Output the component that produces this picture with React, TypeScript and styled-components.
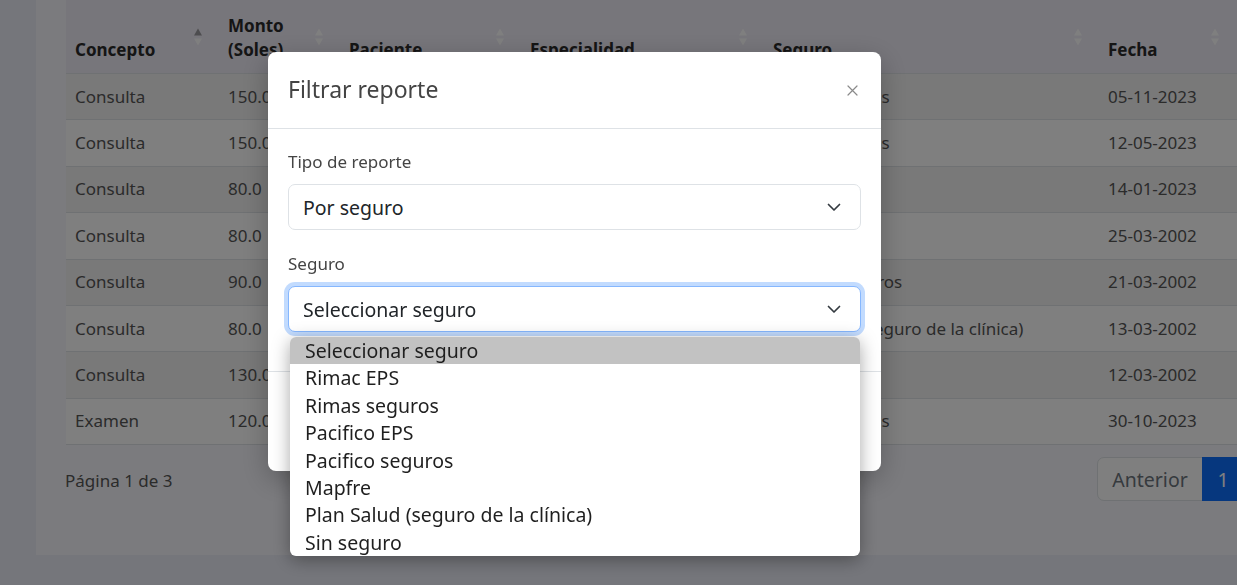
import React from 'react';
import styled, { createGlobalStyle, css } from 'styled-components';

const GlobalStyle = createGlobalStyle`
  * { box-sizing: border-box; }
  html, body { margin: 0; padding: 0; }
  body {
    width: 1237px;
    height: 585px;
    overflow: hidden;
    background: #eaecf6;
    font-family: "Noto Sans", "Open Sans", "DejaVu Sans", sans-serif;
    color: #212529;
  }
`;

const Page = styled.div`
  width: 1237px;
  height: 585px;
  overflow: hidden;
  padding-left: 36px;
`;

const Card = styled.section`
  width: 1429px;
  background: #f6f6fc;
  padding: 0 30px 54px;
`;

const Table = styled.table`
  width: 1369px;
  border-collapse: collapse;
  table-layout: fixed;
  font-size: 17px;
  color: #565656;
`;

const Col = styled.col<{ $w: number }>`
  width: ${(p) => p.$w}px;
`;

const Th = styled.th`
  position: relative;
  text-align: left;
  vertical-align: bottom;
  font-weight: 700;
  color: #2a2a2a;
  background: #eeecf6;
  line-height: 24px;
  padding: 14px 34px 11px 9px;
  border-bottom: 1px solid #dee2e6;
`;

const SortIcon = styled.span`
  position: absolute;
  right: 17px;
  top: 50%;
  transform: translateY(-50%);
  display: flex;
  flex-direction: column;
  gap: 3px;
`;

const Tri = styled.span<{ $dir: 'up' | 'down'; $active?: boolean }>`
  width: 0;
  height: 0;
  border-left: 4.5px solid transparent;
  border-right: 4.5px solid transparent;
  ${(p) =>
    p.$dir === 'up'
      ? css`border-bottom: 7px solid ${p.$active ? '#9a9a9e' : '#ffffff'};`
      : css`border-top: 7px solid ${p.$active ? '#9a9a9e' : '#ffffff'};`}
`;

const BodyRow = styled.tr`
  background: #ffffff;
  &:nth-child(odd) {
    background: #f2f2f2;
  }
`;

const Td = styled.td`
  padding: 9.7px 9px;
  line-height: 26px;
  border-bottom: 1px solid #dee2e6;
  white-space: nowrap;
  overflow: hidden;
`;

const TableFooter = styled.div`
  display: flex;
  justify-content: space-between;
  align-items: center;
  margin-top: 12px;
`;

const PageInfo = styled.span`
  font-size: 17px;
  color: #565656;
  margin-left: -1px;
  margin-top: 3px;
`;

const Pagination = styled.nav`
  display: flex;
`;

const PageBtn = styled.button<{ $w: number; $active?: boolean }>`
  width: ${(p) => p.$w}px;
  height: 44px;
  margin-left: -1px;
  font-family: inherit;
  font-size: 19.5px;
  border: 1px solid #dee2e6;
  background: #ffffff;
  color: #6c757d;
  padding: 0;
  &:first-child {
    margin-left: 0;
    border-radius: 7px 0 0 7px;
  }
  &:last-child {
    border-radius: 0 7px 7px 0;
  }
  ${(p) =>
    p.$active &&
    css`
      background: #0d6efd;
      border-color: #0d6efd;
      color: #ffffff;
    `}
`;

const Backdrop = styled.div`
  position: fixed;
  inset: 0;
  background: rgba(0, 0, 0, 0.5);
`;

const ModalLayer = styled.div`
  position: fixed;
  inset: 0;
  padding: 52px 0 0 268px;
`;

const Dialog = styled.div`
  width: 613px;
  background: #ffffff;
  border-radius: 8px;
  box-shadow: 0 8px 28px rgba(0, 0, 0, 0.25);
  position: relative;
`;

const ModalHeader = styled.header`
  height: 77px;
  display: flex;
  align-items: center;
  justify-content: space-between;
  padding: 0 20px;
  border-bottom: 1px solid #dee2e6;
`;

const ModalTitle = styled.h5`
  margin: 0 0 2px;
  font-size: 23px;
  font-weight: 400;
  line-height: 1.5;
  color: #444444;
`;

const CloseBtn = styled.button`
  width: 18px;
  height: 18px;
  padding: 0;
  border: 0;
  background: transparent;
  display: flex;
  align-items: center;
  justify-content: center;
`;

const ModalBody = styled.div`
  padding: 20px 20px 18px;
`;

const Field = styled.div`
  margin-bottom: 21px;
`;

const Label = styled.label`
  display: block;
  font-size: 17px;
  line-height: 26px;
  color: #444444;
  margin-bottom: 9px;
`;

const SelectWrap = styled.div`
  position: relative;
`;

const SelectBox = styled.div<{ $focused?: boolean }>`
  height: 46px;
  display: flex;
  align-items: center;
  justify-content: space-between;
  padding: 0 18px 0 14px;
  border: 1px solid #dee2e6;
  border-radius: 7px;
  font-size: 19.5px;
  color: #212529;
  background: #ffffff;
  ${(p) =>
    p.$focused &&
    css`
      border-color: #86b7fe;
      box-shadow: 0 0 0 4px rgba(13, 110, 253, 0.25);
    `}
`;

const Dropdown = styled.ul`
  position: absolute;
  top: calc(100% + 5px);
  left: 2px;
  width: 570px;
  margin: 0;
  padding: 0;
  list-style: none;
  background: #ffffff;
  border-radius: 6px;
  overflow: hidden;
  box-shadow: 0 4px 18px rgba(0, 0, 0, 0.35);
  z-index: 10;
`;

const Option = styled.li<{ $selected?: boolean }>`
  height: 27.4px;
  line-height: 27.4px;
  padding: 0 15px;
  font-size: 19.5px;
  color: #1f1f1f;
  background: ${(p) => (p.$selected ? '#c2c2c2' : 'transparent')};
`;

const ModalFooter = styled.footer`
  height: 100px;
  border-top: 1px solid #dee2e6;
  display: flex;
  align-items: center;
  justify-content: flex-end;
  gap: 10px;
  padding: 0 24px;
`;

const FooterBtn = styled.button<{ $primary?: boolean }>`
  height: 44px;
  padding: 0 18px;
  font-family: inherit;
  font-size: 17px;
  border-radius: 7px;
  border: 1px solid ${(p) => (p.$primary ? '#0d6efd' : '#6c757d')};
  background: ${(p) => (p.$primary ? '#0d6efd' : '#6c757d')};
  color: #ffffff;
`;

const Chevron = () => (
  <svg width="16" height="16" viewBox="0 0 16 16" fill="none">
    <path d="M2.5 5.5L8 11l5.5-5.5" stroke="#343a40" strokeWidth="1.7" strokeLinecap="round" strokeLinejoin="round" />
  </svg>
);

const CloseIcon = () => (
  <svg width="11" height="11" viewBox="0 0 11 11" fill="none">
    <path d="M1 1l9 9M10 1l-9 9" stroke="#8a8a8a" strokeWidth="1.2" strokeLinecap="round" />
  </svg>
);

const columns = [
  { label: 'Concepto', w: 153, active: true },
  { label: 'Monto (Soles)', w: 121 },
  { label: 'Paciente', w: 181 },
  { label: 'Especialidad', w: 243 },
  { label: 'Seguro', w: 335 },
  { label: 'Fecha', w: 137 },
  { label: 'Acciones', w: 199 },
];

const rows = [
  ['Consulta', '150.0', 'Juan Pérez', 'Cardiología', 'Rimas seguros', '05-11-2023'],
  ['Consulta', '150.0', 'María López', 'Pediatría', 'Rimas seguros', '12-05-2023'],
  ['Consulta', '80.0', 'Carlos Ramos', 'Medicina general', 'Rimac EPS', '14-01-2023'],
  ['Consulta', '80.0', 'Ana Torres', 'Dermatología', 'Mapfre', '25-03-2002'],
  ['Consulta', '90.0', 'Luis Díaz', 'Traumatología', 'Pacifico seguros', '21-03-2002'],
  ['Consulta', '80.0', 'Rosa Quispe', 'Ginecología', 'Plan Salud (seguro de la clínica)', '13-03-2002'],
  ['Consulta', '130.0', 'Pedro Castro', 'Neurología', 'Sin seguro', '12-03-2002'],
  ['Examen', '120.0', 'Lucía Flores', 'Laboratorio', 'Rimas seguros', '30-10-2023'],
];

const seguros = [
  'Seleccionar seguro',
  'Rimac EPS',
  'Rimas seguros',
  'Pacifico EPS',
  'Pacifico seguros',
  'Mapfre',
  'Plan Salud (seguro de la clínica)',
  'Sin seguro',
];

export default function App() {
  return (
    <>
      <GlobalStyle />
      <Page>
        <Card>
          <Table>
            <colgroup>
              {columns.map((c) => (
                <Col key={c.label} $w={c.w} />
              ))}
            </colgroup>
            <thead>
              <tr>
                {columns.map((c) => (
                  <Th key={c.label}>
                    {c.label}
                    <SortIcon>
                      <Tri $dir="up" $active={c.active} />
                      <Tri $dir="down" />
                    </SortIcon>
                  </Th>
                ))}
              </tr>
            </thead>
            <tbody>
              {rows.map((r, i) => (
                <BodyRow key={i}>
                  {r.map((cell, j) => (
                    <Td key={j}>{cell}</Td>
                  ))}
                  <Td />
                </BodyRow>
              ))}
            </tbody>
          </Table>
          <TableFooter>
            <PageInfo>Página 1 de 3</PageInfo>
            <Pagination>
              <PageBtn $w={106}>Anterior</PageBtn>
              <PageBtn $w={42} $active>1</PageBtn>
              <PageBtn $w={42}>2</PageBtn>
              <PageBtn $w={42}>3</PageBtn>
              <PageBtn $w={110}>Siguiente</PageBtn>
            </Pagination>
          </TableFooter>
        </Card>
      </Page>
      <Backdrop />
      <ModalLayer>
        <Dialog>
          <ModalHeader>
            <ModalTitle>Filtrar reporte</ModalTitle>
            <CloseBtn aria-label="Cerrar">
              <CloseIcon />
            </CloseBtn>
          </ModalHeader>
          <ModalBody>
            <Field>
              <Label>Tipo de reporte</Label>
              <SelectWrap>
                <SelectBox>
                  <span>Por seguro</span>
                  <Chevron />
                </SelectBox>
              </SelectWrap>
            </Field>
            <Field>
              <Label>Seguro</Label>
              <SelectWrap>
                <SelectBox $focused>
                  <span>Seleccionar seguro</span>
                  <Chevron />
                </SelectBox>
                <Dropdown>
                  {seguros.map((s, i) => (
                    <Option key={s} $selected={i === 0}>
                      {s}
                    </Option>
                  ))}
                </Dropdown>
              </SelectWrap>
            </Field>
          </ModalBody>
          <ModalFooter>
            <FooterBtn>Cerrar</FooterBtn>
            <FooterBtn $primary>Generar reporte</FooterBtn>
          </ModalFooter>
        </Dialog>
      </ModalLayer>
    </>
  );
}
